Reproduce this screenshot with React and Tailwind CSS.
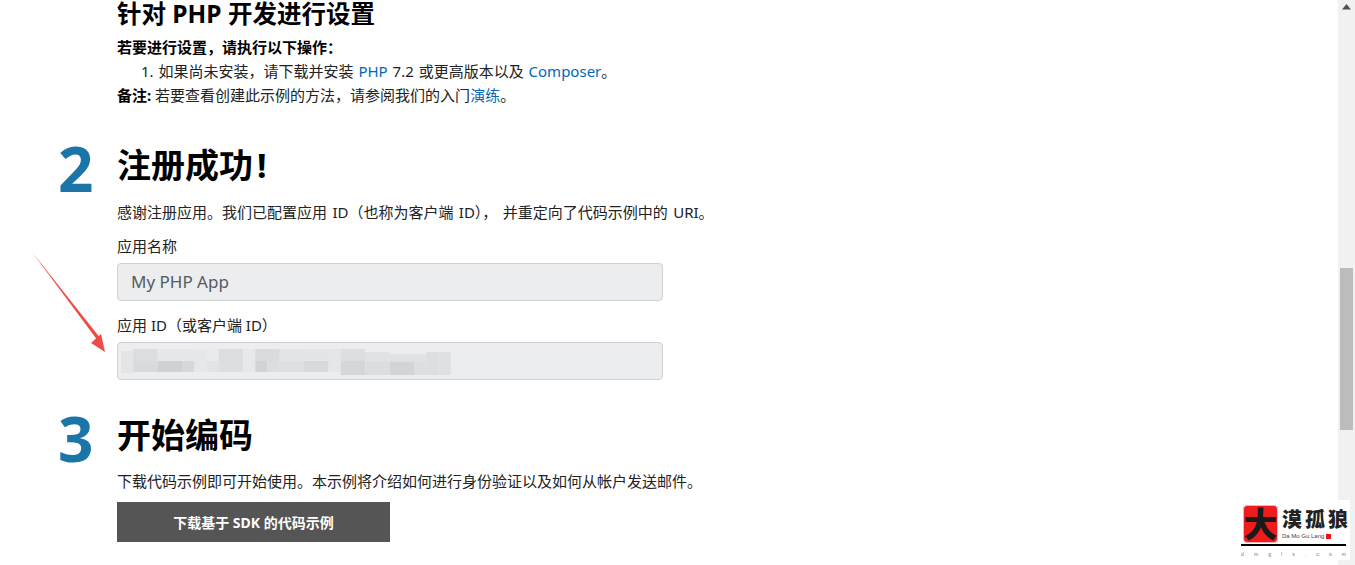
const mosaic = [
  // [x, y, w, h, colour] of the blurred client ID
  [0, 2, 11, 22, "#e4e5e6"], [11, 0, 22, 12, "#dcdddf"], [11, 12, 22, 11, "#d9dadc"],
  [33, 0, 22, 12, "#e6e7e8"], [33, 12, 22, 11, "#d0d1d3"], [55, 0, 11, 12, "#e6e7e8"],
  [55, 12, 11, 11, "#d7d8da"], [66, 0, 11, 23, "#e6e7e8"], [77, 0, 11, 12, "#e9eaeb"],
  [77, 12, 11, 11, "#e2e3e4"], [88, 0, 22, 12, "#dcdddf"], [88, 12, 22, 11, "#dddee0"],
  [110, 0, 11, 23, "#e7e8e9"], [121, 0, 22, 12, "#dadbdd"], [121, 12, 11, 11, "#d2d3d5"],
  [132, 12, 11, 11, "#dcdddf"], [143, 0, 22, 12, "#e3e4e5"], [143, 12, 22, 11, "#dfe0e2"],
  [165, 0, 22, 12, "#e4e5e6"], [165, 12, 22, 11, "#d8d9db"], [187, 0, 11, 23, "#e5e6e7"],
  [198, 0, 22, 12, "#dddee0"], [198, 12, 22, 14, "#d5d6d8"], [220, 3, 22, 10, "#e1e2e3"],
  [220, 13, 22, 13, "#dcdddf"], [242, 5, 22, 8, "#e0e1e2"], [242, 13, 22, 13, "#d3d4d6"],
  [264, 5, 11, 8, "#e1e2e3"], [264, 13, 11, 13, "#dddee0"], [275, 3, 11, 23, "#dddee0"],
  [286, 3, 11, 23, "#dfe0e1"],
];

function Step({ number, title, children }) {
  return (
    <section className="flex">
      <div className="w-[59px] shrink-0 text-[62px] leading-[54px] font-bold text-[#1b75a8]">
        {number}
      </div>
      <div className="min-w-0 flex-1">
        <h2 className="text-[34px] leading-[48px] font-bold text-black">{title}</h2>
        {children}
      </div>
    </section>
  );
}

function Field({ label, value, children }) {
  return (
    <div>
      <div className="text-[15px] leading-[24px] text-[#222222]">{label}</div>
      <div className="relative mt-[5px] flex h-[38px] w-[546px] items-center rounded border border-[#cfd1d4] bg-[#ecedef] px-[13px] text-[17px] text-[#555b60]">
        {value}
        {children}
      </div>
    </div>
  );
}

export default function App() {
  return (
    <div className="relative flex h-[565px] w-full overflow-hidden bg-white font-['Noto_Sans','Noto_Sans_CJK_SC',sans-serif] text-[#222222]">
      {/* Page content */}
      <main className="min-w-0 flex-1 pl-[58px]">
        <div className="pl-[59px]">
          <h3 className="text-[24.5px] leading-[28px] font-bold text-black">针对 PHP 开发进行设置</h3>
          <div className="mt-[7px] text-[15px] leading-[24px]">
            <p className="font-bold text-black">若要进行设置，请执行以下操作：</p>
            <p className="pl-[24px] [word-spacing:1px]">
              1. 如果尚未安装，请下载并安装 <a className="text-[#0067b8]">PHP</a> 7.2 或更高版本以及{" "}
              <a className="text-[#0067b8]">Composer</a>。
            </p>
            <p>
              <b className="text-black">备注:</b> 若要查看创建此示例的方法，请参阅我们的入门
              <a className="text-[#0067b8]">演练</a>。
            </p>
          </div>
        </div>

        <div className="mt-[34px]">
          <Step
            number="2"
            title={
              <>
                注册成功<span className="ml-[4px]">!</span>
              </>
            }
          >
            <p className="mt-[11px] text-[15px] leading-[24px] [word-spacing:1.5px]">
              感谢注册应用。我们已配置应用 ID（也称为客户端 ID）， 并重定向了代码示例中的 URI。
            </p>
            <div className="mt-[10px] flex flex-col gap-[12px]">
              <Field label="应用名称" value="My PHP App" />
              <Field label="应用 ID（或客户端 ID）">
                <svg
                  className="absolute top-[6px] left-[3px]"
                  width="333"
                  height="26"
                  viewBox="0 0 300 26"
                  preserveAspectRatio="none"
                >
                  {mosaic.map(([x, y, w, h, c], i) => (
                    <rect key={i} x={x} y={y} width={w} height={h} fill={c} />
                  ))}
                </svg>
              </Field>
            </div>
          </Step>
        </div>

        <div className="mt-[31px]">
          <Step number="3" title="开始编码">
            <p className="mt-[10px] text-[15px] leading-[24px]">
              下载代码示例即可开始使用。本示例将介绍如何进行身份验证以及如何从帐户发送邮件。
            </p>
            <button className="mt-[9px] flex h-[40px] w-[273px] items-center justify-center bg-[#555555] text-[14px] font-bold text-white">
              下载基于 SDK 的代码示例
            </button>
          </Step>
        </div>
      </main>

      {/* Scrollbar */}
      <aside className="flex w-[17px] shrink-0 flex-col items-center bg-[#f1f1f1]">
        <svg className="mt-[4px]" width="9" height="6" viewBox="0 0 9 6">
          <path d="M4.5 0 9 5.5H0z" fill="#505050" />
        </svg>
        <div className="mt-[258px] h-[162px] w-[13px] bg-[#bcbcbc]" />
      </aside>

      {/* Red arrow annotation */}
      <svg className="absolute top-[250px] left-[28px]" width="84" height="106" viewBox="0 0 84 106">
        <path d="M4 2 70 91l3-2z" fill="#f04a45" />
        <path d="M77 102 63 93l10-9z" fill="#f04a45" />
      </svg>

      {/* Watermark */}
      <div className="absolute top-[500px] right-[5px] flex h-[60px] w-[123px] flex-col items-center bg-white pt-[5px] pl-[10px]">
        <div className="flex items-start gap-[4px] pl-[4px]">
          <div className="flex h-[38px] w-[35px] items-center justify-center rounded-sm border border-[#f5b5b5] bg-[#ee1c1c] text-[34px] leading-none font-black text-[#1a1a1a]">
            大
          </div>
          <div className="flex flex-col">
            <div className="flex w-[66px] justify-between pt-[4px] text-[20px] leading-[22px] font-black text-[#222222]">
              <span>漠</span>
              <span>孤</span>
              <span>狼</span>
            </div>
            <div className="mt-[1px] flex items-center gap-[2px] font-['Liberation_Sans',sans-serif] text-[6px] leading-[8px] text-[#444444]">
              Da Mo Gu Lang
              <span className="h-[5px] w-[5px] bg-[#ee1111]" />
            </div>
          </div>
        </div>
        <div className="mt-[1px] h-[2px] w-[105px] bg-black" />
        <div className="mt-[5px] flex w-[105px] justify-between font-['Liberation_Sans',sans-serif] text-[5px] leading-[6px] text-[#777777]">
          {"dmgls.com".split("").map((c, i) => (
            <span key={i}>{c}</span>
          ))}
        </div>
      </div>
    </div>
  );
}
